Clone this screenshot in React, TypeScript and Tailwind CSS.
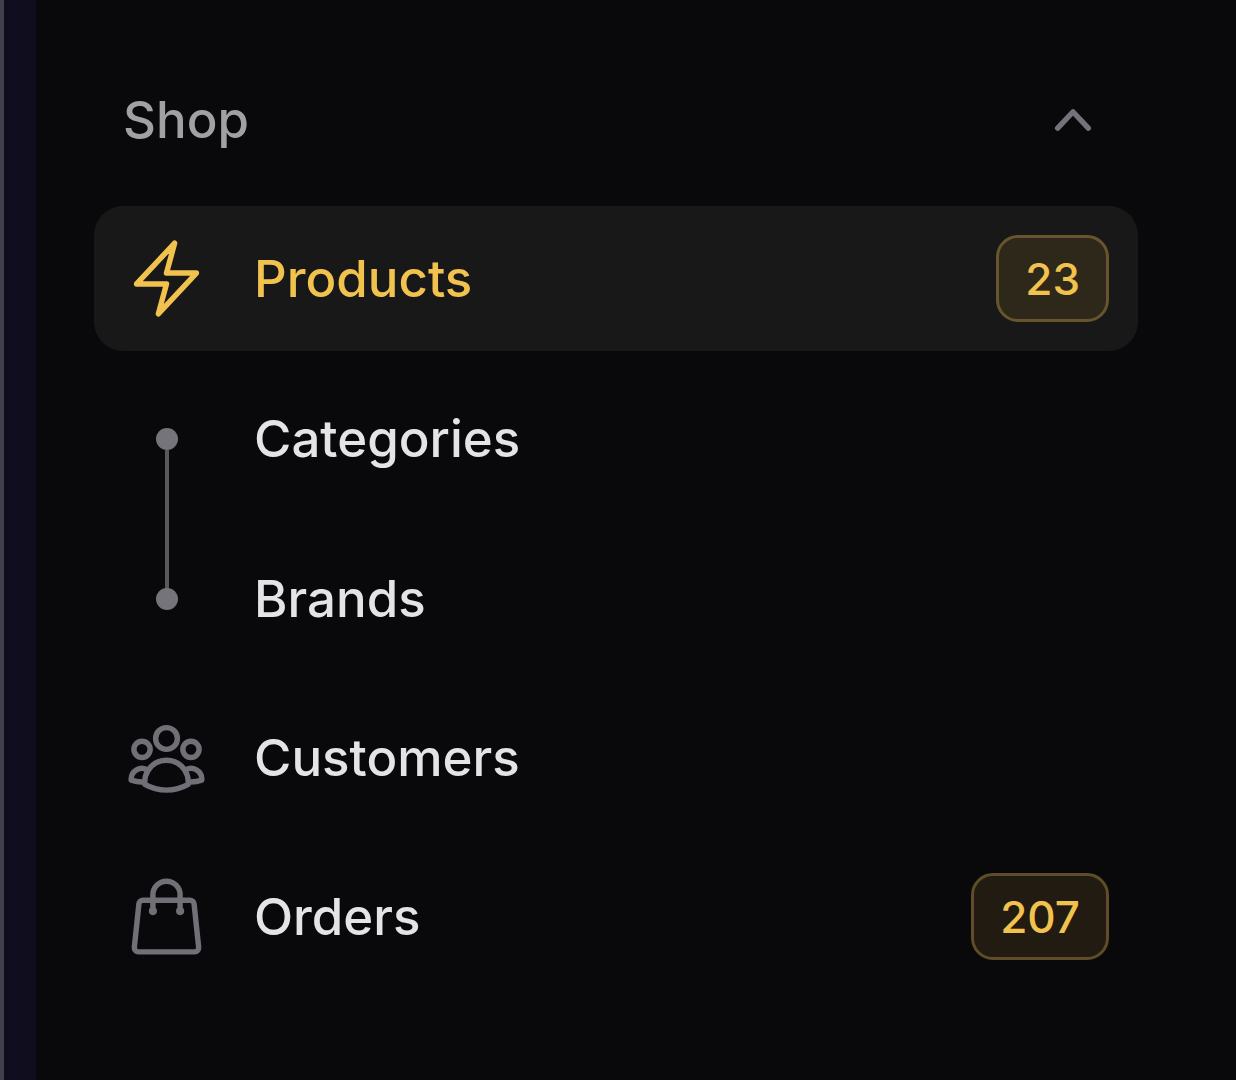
import React, { type ReactNode } from "react";
import { HiOutlineBolt, HiOutlineShoppingBag, HiOutlineUserGroup } from "react-icons/hi2";

function Badge({ children, active }: { children: ReactNode; active?: boolean }) {
  return (
    <span
      className={
        "flex h-[87px] items-center rounded-[22px] border-3 px-[26px] text-[44px] text-[#f1c24d] " +
        (active ? "border-[#66552d] bg-[#2e281b]" : "border-[#5e4d28] bg-[#211b12]")
      }
    >
      {children}
    </span>
  );
}

type ItemProps = { label: string; icon: ReactNode; badge?: string; active?: boolean; children?: ReactNode };

function Item({ label, icon, badge, active, children }: ItemProps) {
  return (
    <li>
      <a
        href="#"
        aria-current={active ? "page" : undefined}
        className={
          "flex h-[145px] items-center gap-11 rounded-[29px] px-[29px] " +
          (active ? "bg-[#181818] text-[#f1c24d]" : "text-[#e4e4e6]")
        }
      >
        <span className="flex w-[87px] shrink-0 justify-center">{icon}</span>
        <span className="flex-1">{label}</span>
        {badge && <Badge active={active}>{badge}</Badge>}
      </a>
      {children}
    </li>
  );
}

function Dot({ linked }: { linked?: boolean }) {
  return (
    <span className="relative flex size-[22px] justify-center rounded-full bg-[#75747a]">
      {linked && <span className="absolute top-full h-[139px] w-[4px] bg-[#58575b]" />}
    </span>
  );
}

export default function App() {
  return (
    <div className="flex min-h-screen bg-[#09090b] font-['Inter',sans-serif] text-[51px] leading-[72px] font-medium antialiased">
      <div className="w-9 border-l-4 border-[#413f4c] bg-[#0f0d1e]" />
      <nav aria-label="Shop" className="flex-1 pt-12 pr-[98px] pl-[58px]">
        <button
          type="button"
          aria-expanded="true"
          className="flex h-[144px] w-full items-center justify-between px-[29px] text-[#a1a1a5]"
        >
          Shop
          <svg viewBox="0 0 20 20" fill="currentColor" className="size-[72px] text-[#74737a]" aria-hidden="true">
            <path
              fillRule="evenodd"
              clipRule="evenodd"
              d="M14.77 12.79a.75.75 0 0 1-1.06-.02L10 8.832 6.29 12.77a.75.75 0 1 1-1.08-1.04l4.25-4.5a.75.75 0 0 1 1.08 0l4.25 4.5a.75.75 0 0 1-.02 1.06Z"
            />
          </svg>
        </button>
        <ul className="flex flex-col gap-[14px] pt-[14px]">
          <Item label="Products" active badge="23" icon={<HiOutlineBolt className="size-[87px]" />}>
            <ul className="flex flex-col gap-[15px] pt-[15px]">
              <Item label="Categories" icon={<Dot linked />} />
              <Item label="Brands" icon={<Dot />} />
            </ul>
          </Item>
          <Item label="Customers" icon={<HiOutlineUserGroup className="size-[87px] text-[#717076]" />} />
          <Item label="Orders" badge="207" icon={<HiOutlineShoppingBag className="size-[87px] text-[#717076]" />} />
        </ul>
      </nav>
    </div>
  );
}
